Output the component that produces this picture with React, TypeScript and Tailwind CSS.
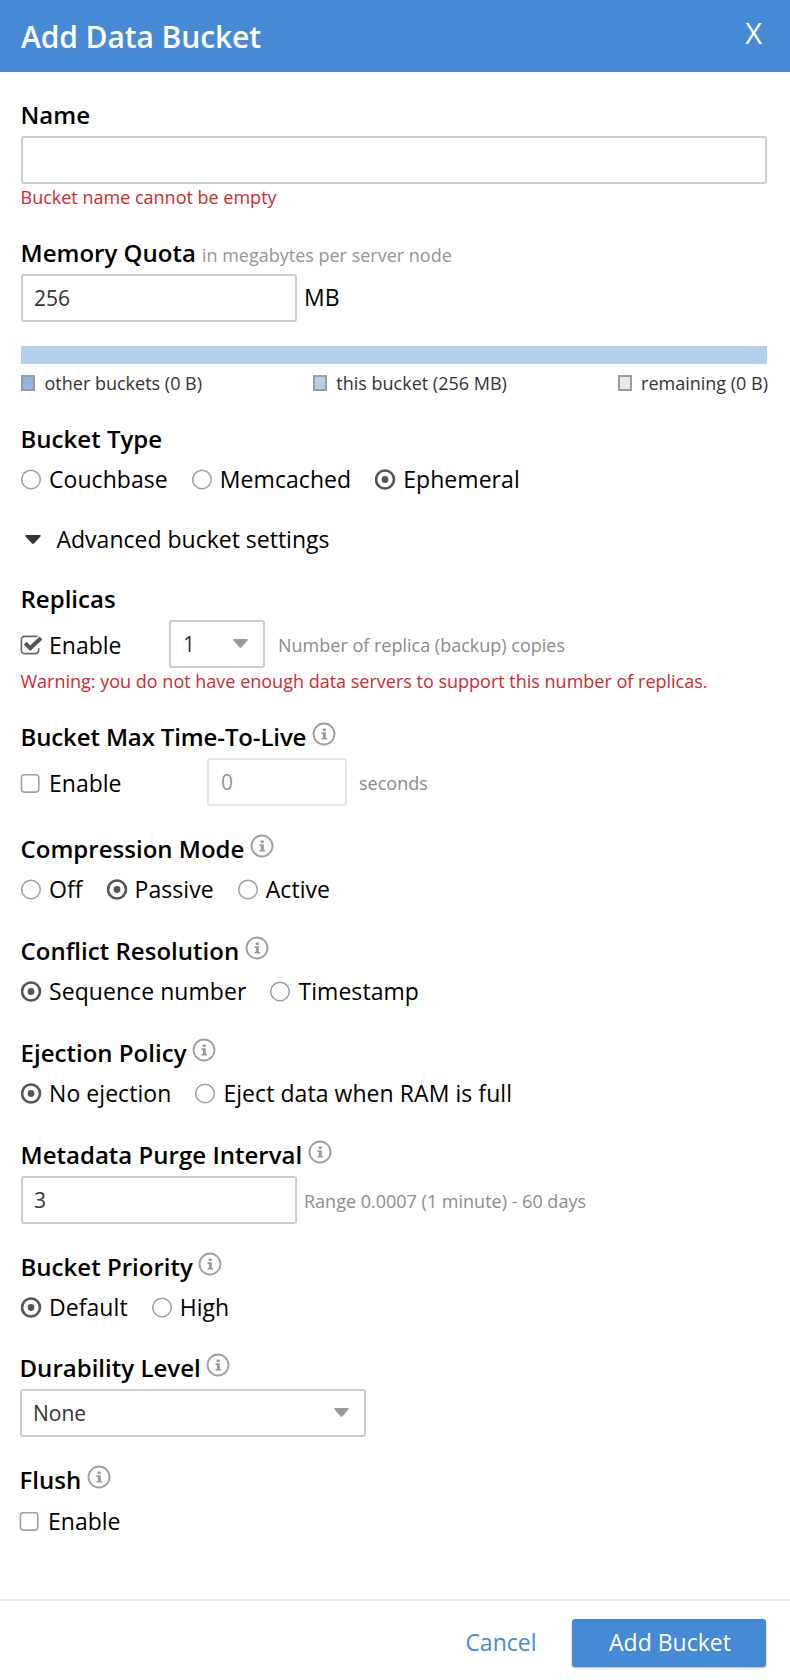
import type { ReactNode } from "react";

function InfoIcon() {
  return (
    <svg className="ml-[5.5px] mt-[1px] size-6 shrink-0" viewBox="0 0 24 24" fill="none">
      <circle cx="12" cy="12" r="10.5" stroke="#a0a0a0" strokeWidth="1.9" />
      <rect x="10.6" y="6.6" width="3.2" height="2.3" rx="0.6" fill="#999" />
      <path d="M9.5 10.2h4.3v5.7h1.3v1.7H9.5v-1.7h1.4v-4H9.5z" fill="#999" />
    </svg>
  );
}

function Label({ children, info = false, tight = false }: { children: ReactNode; info?: boolean; tight?: boolean }) {
  return (
    <div className="-ml-[0.5px] flex h-8 items-start">
      <h2
        className={`whitespace-nowrap text-[24px] font-semibold leading-8 ${
          tight ? "tracking-[-0.13px]" : "tracking-[0.02px]"
        }`}
      >
        {children}
      </h2>
      {info && <InfoIcon />}
    </div>
  );
}

function Radio({ label, checked = false }: { label: string; checked?: boolean }) {
  return (
    <label className="flex h-8 items-center gap-[7px]">
      <svg className="mt-px size-[21px] shrink-0" viewBox="0 0 21 21" fill="none">
        {checked ? (
          <>
            <circle cx="10" cy="10.5" r="9" stroke="#555" strokeWidth="2.6" />
            <circle cx="10" cy="10.5" r="3.4" fill="#555" />
          </>
        ) : (
          <circle cx="10" cy="10.5" r="9.3" stroke="#a0a0a0" strokeWidth="1.5" />
        )}
      </svg>
      <span className="whitespace-nowrap text-[23px] leading-8 tracking-[0.06px]">{label}</span>
    </label>
  );
}

function RadioGroup({ options, selected }: { options: string[]; selected: string }) {
  return (
    <div className="mt-2 flex gap-6">
      {options.map((option) => (
        <Radio key={option} label={option} checked={option === selected} />
      ))}
    </div>
  );
}

function Checkbox({ checked = false }: { checked?: boolean }) {
  return (
    <label className="-ml-px flex h-8 items-center gap-[6px]">
      <svg className="mt-px h-[21px] w-[23px] shrink-0" viewBox="0 0 23 21" fill="none">
        {checked ? (
          <>
            <path
              d="M17.6 1.4H4.4A3 3 0 0 0 1.4 4.4v11.2a3 3 0 0 0 3 3h11.2a3 3 0 0 0 3-3v-2.4"
              stroke="#666"
              strokeWidth="1.6"
            />
            <path d="M5.2 8.2l5.1 5.1L21 3" stroke="#555" strokeWidth="4" />
          </>
        ) : (
          <rect x="1.4" y="1.7" width="17.4" height="17.4" rx="3" stroke="#a0a0a0" strokeWidth="1.6" />
        )}
      </svg>
      <span className="text-[23px] leading-8">Enable</span>
    </label>
  );
}

function Caret() {
  return (
    <svg className="-mt-[3px] h-[9px] w-[15px]" viewBox="0 0 15 9">
      <path d="M1 0h13q1.3.5.4 1.4L8.4 8.4q-.9.8-1.8 0L.6 1.4Q-.3.5 1 0z" fill="#999" />
    </svg>
  );
}

const field = "flex h-12 shrink-0 items-center rounded-[3px] border-2 border-[#ccc] pt-[2px] text-[21px] text-[#333]";
const hint = "whitespace-nowrap pt-[2px] text-lg leading-6 text-[#8c8c8c]";

function Swatch({ color, label }: { color: string; label: string }) {
  return (
    <div className="flex items-center gap-[9.5px]">
      <span className={`h-4 w-3.5 border-2 border-[#9c9c9c] ${color}`} />
      <span className="whitespace-nowrap">{label}</span>
    </div>
  );
}

export default function App() {
  return (
    <div className="flex h-[1680px] w-[790px] flex-col bg-white font-['Open_Sans',sans-serif] text-black">
      <header className="flex h-[72px] shrink-0 justify-between bg-[#468ad5] pl-[21px] pr-7 text-white">
        <h1 className="pt-[17px] text-[30px] font-semibold leading-10 tracking-[-0.1px]">Add Data Bucket</h1>
        <button className="flex pt-[13px] text-[29px] leading-10">X</button>
      </header>

      <main className="flex flex-1 flex-col pl-[21px] pr-[23px] pt-[27px]">
        <section>
          <Label>Name</Label>
          <div className={`${field} mt-[5px]`} />
          <p className="-ml-[0.5px] mt-px text-lg leading-6 text-[#cb2b30]">Bucket name cannot be empty</p>
        </section>

        <section className="mt-7">
          <div className="flex items-baseline">
            <Label>Memory Quota</Label>
            <span className="ml-1.5 text-lg leading-6 text-[#959595]">in megabytes per server node</span>
          </div>
          <div className="mt-[5px] flex items-center">
            <div className={`${field} w-[276px] pl-[11px]`}>256</div>
            <span className="ml-[7px] pb-[2px] text-[23px] leading-8">MB</span>
          </div>
          <div className="mt-6 h-[18px] bg-[#b4cfee]" />
          <div className="-mr-px mt-[7px] flex h-6 items-center justify-between text-lg leading-6 text-[#333]">
            <Swatch color="bg-[#8cb7e6]" label="other buckets (0 B)" />
            <Swatch color="bg-[#b4cfee]" label="this bucket (256 MB)" />
            <Swatch color="bg-[#edeade]" label="remaining (0 B)" />
          </div>
        </section>

        <section className="mt-7">
          <Label>Bucket Type</Label>
          <RadioGroup options={["Couchbase", "Memcached", "Ephemeral"]} selected="Ephemeral" />
        </section>

        <div className="mt-7 flex h-8 items-center pl-[3.5px]">
          <svg className="mt-px h-[9px] w-4" viewBox="0 0 16 9">
            <path d="M1 0h14q1.2.5.4 1.4L9 8.4q-1 .9-2 0L.6 1.4Q-.2.5 1 0z" fill="#333" />
          </svg>
          <span className="ml-4 text-[23px] leading-8">Advanced bucket settings</span>
        </div>

        <section className="mt-7">
          <Label>Replicas</Label>
          <div className="mt-[5px] flex items-center">
            <div className="w-[148px] pt-[2px]">
              <Checkbox checked />
            </div>
            <div className={`${field} w-24 justify-between pl-3 pr-[15px]`}>
              1
              <Caret />
            </div>
            <span className={`${hint} ml-[13px]`}>Number of replica (backup) copies</span>
          </div>
          <p className="-ml-[0.5px] mt-px whitespace-nowrap text-lg leading-6 text-[#cb2b30]">
            Warning: you do not have enough data servers to support this number of replicas.
          </p>
        </section>

        <section className="mt-7">
          <Label info tight>
            Bucket Max Time-To-Live
          </Label>
          <div className="mt-[5px] flex items-center">
            <div className="w-[186px] pt-[2px]">
              <Checkbox />
            </div>
            <div className="flex h-12 w-[140px] items-center rounded-[3px] border-2 border-[#e4e4e4] pl-3 pt-[2px] text-[21px] text-[#959595]">
              0
            </div>
            <span className={`${hint} ml-3`}>seconds</span>
          </div>
        </section>

        <section className="mt-[27px]">
          <Label info>Compression Mode</Label>
          <RadioGroup options={["Off", "Passive", "Active"]} selected="Passive" />
        </section>

        <section className="mt-[30px]">
          <Label info>Conflict Resolution</Label>
          <RadioGroup options={["Sequence number", "Timestamp"]} selected="Sequence number" />
        </section>

        <section className="mt-[30px]">
          <Label info>Ejection Policy</Label>
          <RadioGroup options={["No ejection", "Eject data when RAM is full"]} selected="No ejection" />
        </section>

        <section className="mt-[30px]">
          <Label info>Metadata Purge Interval</Label>
          <div className="mt-[5px] flex items-center">
            <div className={`${field} w-[276px] pl-[11px]`}>3</div>
            <span className={`${hint} ml-[7px]`}>Range 0.0007 (1 minute) - 60 days</span>
          </div>
        </section>

        <section className="mt-[27px]">
          <Label info>Bucket Priority</Label>
          <RadioGroup options={["Default", "High"]} selected="Default" />
        </section>

        <section className="-ml-px mt-[29px]">
          <Label info>Durability Level</Label>
          <div className={`${field} mt-[5px] w-[346px] justify-between pl-[11px] pr-[15px]`}>
            None
            <Caret />
          </div>
        </section>

        <section className="-ml-px mt-[27px]">
          <Label info>Flush</Label>
          <div className="mt-2 pt-px">
            <Checkbox />
          </div>
        </section>
      </main>

      <footer className="flex h-[81px] shrink-0 items-start justify-end gap-[35.5px] border-t-2 border-[#ebebeb] pr-6 pt-[18px] text-[23px]">
        <button className="h-12 pb-[2px] text-[#468ad5]">Cancel</button>
        <button className="h-12 w-[194px] rounded-[3px] bg-[#468ad5] pb-[2px] pl-[2px] text-white shadow-[0_1px_2px_rgba(0,0,0,0.3)]">
          Add Bucket
        </button>
      </footer>
    </div>
  );
}
